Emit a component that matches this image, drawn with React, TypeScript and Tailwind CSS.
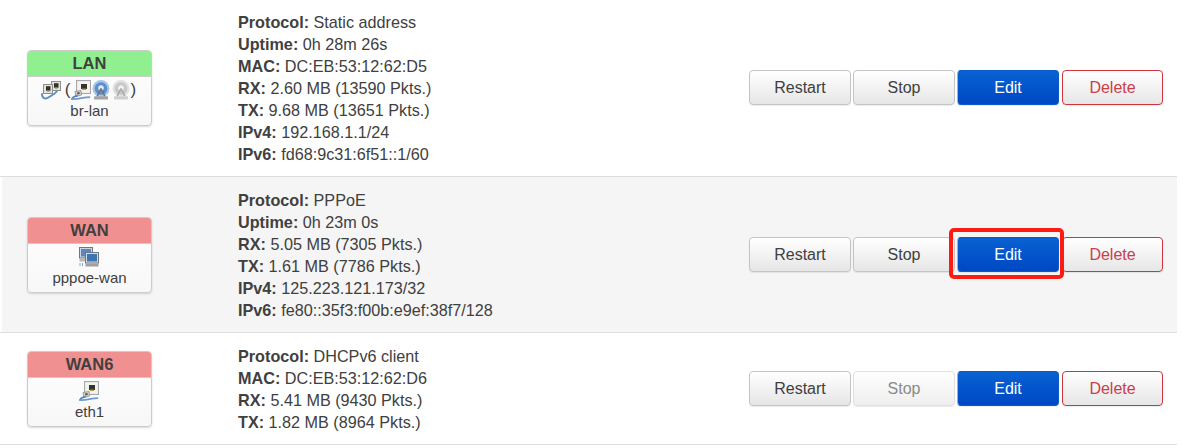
const font = "font-['Liberation_Sans',Arial,sans-serif]";

function EthIcon() {
  return (
    <svg width="20" height="20" viewBox="0 0 20 20" className="block">
      <rect x="5.5" y="0.5" width="14" height="13" fill="#e6e6e2" stroke="#a8a8a8" />
      <rect x="6.5" y="1.5" width="12" height="11" fill="#f2f2ee" />
      <rect x="10" y="4" width="6" height="5" fill="#33332a" />
      <rect x="11" y="8.5" width="4" height="1.5" fill="#a89a3a" />
      <path d="M4 11.5 L10 10.5 L10.5 15 L5 16.5 Z" fill="#d2d2d2" stroke="#8a8a8a" strokeWidth="0.8" />
      <path d="M6 12.5 L8.5 12 L8.7 14 L6.3 14.6 Z" fill="#555" />
      <path d="M1 19 C2 16.5 4 16 6 15.8" fill="none" stroke="#4f82bd" strokeWidth="1.8" strokeLinecap="round" />
      <path d="M1 19 C6 19.5 10 18 13 17.6 L18.5 17.2" fill="none" stroke="#6d9bd0" strokeWidth="1.7" strokeLinecap="round" />
    </svg>
  );
}

function SwitchIcon() {
  return (
    <svg width="20" height="20" viewBox="0 0 20 20" className="block">
      <rect x="10.5" y="1.5" width="9" height="9" fill="#e2e2de" stroke="#8f8f8f" />
      <rect x="13" y="3.2" width="4.5" height="4.5" fill="#33332a" />
      <rect x="14" y="7.5" width="2.5" height="1.2" fill="#a89a3a" />
      <rect x="2.5" y="4.5" width="9" height="9" fill="#e2e2de" stroke="#8f8f8f" />
      <rect x="5" y="6.2" width="4.5" height="4.5" fill="#33332a" />
      <rect x="6" y="10.5" width="2.5" height="1.2" fill="#a89a3a" />
      <path d="M1 14 C1 19 5 19.5 8 17 C10 15.5 13 15.5 16 11" fill="none" stroke="#5f8fc4" strokeWidth="1.9" strokeLinecap="round" />
    </svg>
  );
}

function WifiIcon({ on }: { on: boolean }) {
  const c = on ? "#5b8fd0" : "#c8c8c8";
  const h = on ? "#a9c6e8" : "#e2e2e2";
  return (
    <svg width="20" height="20" viewBox="0 0 20 20" className="block">
      <circle cx="10" cy="8.5" r="8.5" fill={h} />
      <circle cx="10" cy="8.5" r="6.3" fill={c} />
      <circle cx="10" cy="8" r="2.8" fill={on ? "#dfe9f5" : "#f2f2f2"} />
      <path d="M10 8.5 L6 16.5 M10 8.5 L14 16.5" stroke={on ? "#707070" : "#a8a8a8"} strokeWidth="1.5" />
      <rect x="3" y="16.2" width="14" height="3.2" rx="0.7" fill={on ? "#a4a4a4" : "#cfcfcf"} />
    </svg>
  );
}

function PppIcon() {
  return (
    <svg width="20" height="20" viewBox="0 0 20 20" className="block">
      <rect x="0.5" y="0.5" width="13" height="10.5" fill="#cfd6de" stroke="#6f7680" />
      <rect x="2" y="2" width="10" height="7.5" fill="#5c86bd" />
      <rect x="0.5" y="11.5" width="7" height="3" fill="#b8b8b8" />
      <rect x="6.5" y="5.5" width="13" height="10.5" fill="#d5dbe2" stroke="#6f7680" />
      <rect x="8" y="7" width="10" height="7.5" fill="#3f74b3" />
      <rect x="6.5" y="16.5" width="13" height="3" fill="#a0a0a0" />
      <rect x="0.5" y="16" width="1" height="3" fill="#7aa6d6" />
      <rect x="3" y="16" width="1" height="3" fill="#7aa6d6" />
    </svg>
  );
}

function Badge({ title, color, icon, name }: { title: string; color: string; icon: React.ReactNode; name: string }) {
  return (
    <div className="w-[125px] h-[76px] ml-[25px] rounded-[4px] border border-[#ccc] overflow-hidden shadow-[0_1px_2px_rgba(0,0,0,0.15)] bg-gradient-to-b from-white to-[#f7f7f7]">
      <div className={`h-[26px] leading-[24px] text-center font-bold text-[16.5px] text-[#404040] border-b border-[#ccc] ${color}`}>{title}</div>
      <div className="flex justify-center items-center h-[20px] mt-[3px] -ml-[2px] text-[#404040] text-[17px]">{icon}</div>
      <div className="text-center text-[#404040] text-[15px] leading-[22px]">{name}</div>
    </div>
  );
}

function Btn({ label, kind, narrow }: { label: string; kind: "normal" | "disabled" | "primary" | "danger"; narrow?: boolean }) {
  const styles = {
    normal: "border-[#c4c4c4] from-white to-[#e6e6e6] text-[#404040]",
    disabled: "border-[#e0e0e0] from-white to-[#eeeeee] text-[#8a8a8a]",
    primary: "border-[#0a5bc8] border-l-[#8fb4e6] from-[#0a62d2] to-[#0047c4] text-white",
    danger: "border-[#d0343c] from-white to-[#e6e6e6] text-[#c9404a]",
  }[kind];
  return (
    <button className={`${narrow ? "w-[101px]" : "w-[102px]"} h-[35px] rounded-[4px] border text-[16px] bg-gradient-to-b shadow-[0_1px_1px_rgba(0,0,0,0.08)] ${styles}`}>
      {label}
    </button>
  );
}

function Row({ badge, lines, stopDisabled, alt, highlight, textPad, btnShift }: {
  badge: React.ReactNode;
  lines: [string, string][];
  stopDisabled?: boolean;
  alt?: boolean;
  highlight?: boolean;
  textPad: string;
  btnShift?: string;
}) {
  return (
    <div className="border-b border-[#ddd]">
      <div className={`flex items-center ml-[2px] ${alt ? "bg-[#f5f5f5]" : "bg-white"}`}>
        <div className="w-[236px] shrink-0">{badge}</div>
        <div className={`${textPad} text-[16.2px] leading-[22px] text-[#404040]`}>
          {lines.map(([k, v]) => (
            <div key={k}>
              <b className="font-bold">{k}:</b> {v}
            </div>
          ))}
        </div>
        <div className={`ml-auto mr-[14px] flex gap-[2px] ${btnShift ?? ""}`}>
          <Btn label="Restart" kind="normal" />
          <Btn label="Stop" kind={stopDisabled ? "disabled" : "normal"} />
          <div className="relative mr-[1px]">
            <Btn label="Edit" kind="primary" />
            {highlight && (
              <div className="absolute -left-[8px] -right-[5px] -top-[9px] -bottom-[7px] border-[4px] border-[#ff1a12] rounded-[5px]" />
            )}
          </div>
          <Btn label="Delete" kind="danger" narrow />
        </div>
      </div>
    </div>
  );
}

export default function App() {
  return (
    <div className={`w-[1184px] h-[448px] bg-white overflow-hidden ${font}`}>
      <div className="w-[1177px]">
        <Row
          textPad="pt-[11px] pb-[11px]"
          btnShift="-mt-[1px]"
          badge={
            <Badge
              title="LAN"
              color="bg-[#90f090]"
              name="br-lan"
              icon={
                <>
                  <SwitchIcon />
                  <span className="ml-[4px]">(</span>
                  <EthIcon />
                  <WifiIcon on />
                  <WifiIcon on={false} />
                  <span>)</span>
                </>
              }
            />
          }
          lines={[
            ["Protocol", "Static address"],
            ["Uptime", "0h 28m 26s"],
            ["MAC", "DC:EB:53:12:62:D5"],
            ["RX", "2.60 MB (13590 Pkts.)"],
            ["TX", "9.68 MB (13651 Pkts.)"],
            ["IPv4", "192.168.1.1/24"],
            ["IPv6", "fd68:9c31:6f51::1/60"],
          ]}
        />
        <Row
          alt
          highlight
          textPad="pt-[12px] pb-[11px]"
          badge={<Badge title="WAN" color="bg-[#f09090]" name="pppoe-wan" icon={<PppIcon />} />}
          lines={[
            ["Protocol", "PPPoE"],
            ["Uptime", "0h 23m 0s"],
            ["RX", "5.05 MB (7305 Pkts.)"],
            ["TX", "1.61 MB (7786 Pkts.)"],
            ["IPv4", "125.223.121.173/32"],
            ["IPv6", "fe80::35f3:f00b:e9ef:38f7/128"],
          ]}
        />
        <Row
          stopDisabled
          textPad="pt-[12px] pb-[11px]"
          badge={<Badge title="WAN6" color="bg-[#f09090]" name="eth1" icon={<EthIcon />} />}
          lines={[
            ["Protocol", "DHCPv6 client"],
            ["MAC", "DC:EB:53:12:62:D6"],
            ["RX", "5.41 MB (9430 Pkts.)"],
            ["TX", "1.82 MB (8964 Pkts.)"],
          ]}
        />
      </div>
    </div>
  );
}
